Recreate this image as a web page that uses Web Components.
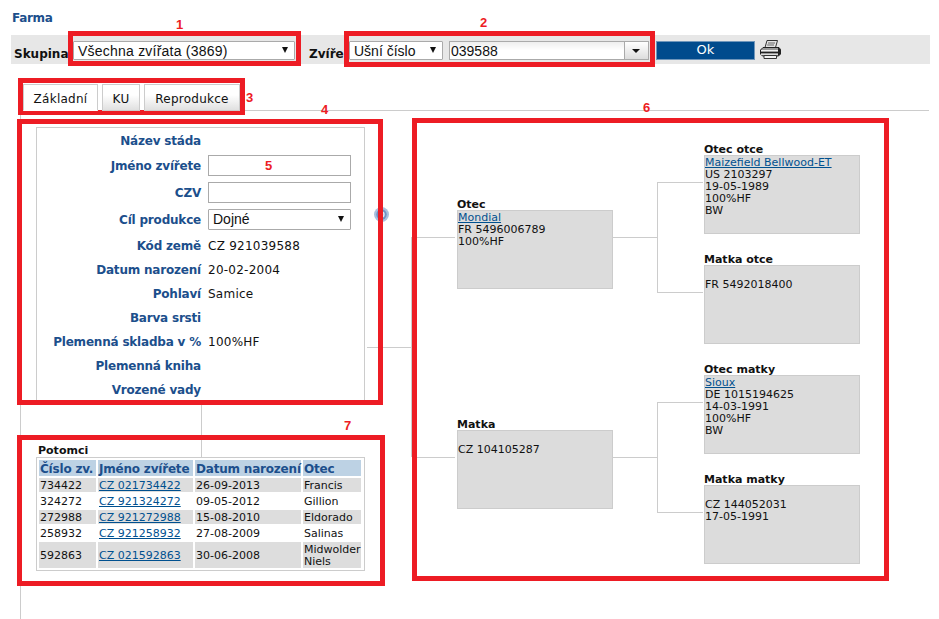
<!DOCTYPE html>
<html lang="cs"><head><meta charset="utf-8"><title>Farma</title>
<style>
html,body{margin:0;padding:0;background:#fff;height:619px;overflow:hidden}
body{font:11px "DejaVu Sans",Verdana,sans-serif;color:#111}
</style></head>
<body>
<farm-app>
  <page-title slot="title">Farma</page-title>
  <filter-bar slot="bar">
    <span slot="l1">Skupina</span>
    <drop-select slot="s1" style="--w:222px;--pt:1px;--ls:.22px">Všechna zvířata (3869)</drop-select>
    <span slot="l2">Zvíře</span>
    <drop-select slot="s2" style="--w:94px;--pt:1px">Ušní číslo</drop-select>
    <combo-input slot="c">039588</combo-input>
  </filter-bar>
  <tab-strip slot="tabs">
    <tab-item active>Základní</tab-item><tab-item style="--w:38px">KU</tab-item><tab-item style="--w:96px">Reprodukce</tab-item>
  </tab-strip>
  <animal-form slot="form">
    <form-row>
      <span slot="label">Název stáda</span>
    </form-row>
    <form-row tall><span slot="label">Jméno zvířete</span><text-box></text-box></form-row>
    <form-row tall><span slot="label">CZV</span><text-box></text-box></form-row>
    <form-row tall><span slot="label">Cíl produkce</span><drop-select style="--w:143px;--h:21px">Dojné</drop-select></form-row>
    <form-row><span slot="label">Kód země</span>CZ 921039588</form-row>
    <form-row><span slot="label">Datum narození</span>20-02-2004</form-row>
    <form-row><span slot="label">Pohlaví</span>Samice</form-row>
    <form-row><span slot="label">Barva srsti</span></form-row>
    <form-row><span slot="label">Plemenná skladba v %</span>100%HF</form-row>
    <form-row><span slot="label">Plemenná kniha</span></form-row>
    <form-row><span slot="label">Vrozené vady</span></form-row>
  </animal-form>
  <offspring-table slot="kids"></offspring-table>
  <pedigree-tree slot="tree">
    <pedigree-node title="Otec" style="--x:92px;--y:83px"><a href="#">Mondial</a><br>FR 5496006789<br>100%HF</pedigree-node>
    <pedigree-node title="Otec otce" style="--x:339px;--y:28px"><a href="#">Maizefield Bellwood-ET</a><br>US 2103297<br>19-05-1989<br>100%HF<br>BW</pedigree-node>
    <pedigree-node title="Matka otce" style="--x:339px;--y:138px"><br>FR 5492018400</pedigree-node>
    <pedigree-node title="Matka" style="--x:92px;--y:303px"><br>CZ 104105287</pedigree-node>
    <pedigree-node title="Otec matky" style="--x:339px;--y:248px"><a href="#">Sioux</a><br>DE 1015194625<br>14-03-1991<br>100%HF<br>BW</pedigree-node>
    <pedigree-node title="Matka matky" style="--x:339px;--y:358px"><br>CZ 144052031<br>17-05-1991</pedigree-node>
  </pedigree-tree>
</farm-app>
<red-mark style="--x:68px;--y:31px;--w:233px;--h:35px"></red-mark>
<red-mark style="--x:344px;--y:31px;--w:311px;--h:36px"></red-mark>
<red-mark style="--x:18px;--y:78px;--w:227px;--h:37px"></red-mark>
<red-mark style="--x:17px;--y:119px;--w:366px;--h:286px"></red-mark>
<red-mark style="--x:412px;--y:118px;--w:477px;--h:463px"></red-mark>
<red-mark style="--x:17px;--y:435px;--w:368px;--h:151px"></red-mark>
<red-num style="--x:176px;--y:17px">1</red-num>
<red-num style="--x:480px;--y:15px">2</red-num>
<red-num style="--x:246px;--y:90px">3</red-num>
<red-num style="--x:321px;--y:102px">4</red-num>
<red-num style="--x:265px;--y:158px">5</red-num>
<red-num style="--x:643px;--y:100px">6</red-num>
<red-num style="--x:344px;--y:418px">7</red-num>
<script>
function def(name, html, init){
  customElements.define(name, class extends HTMLElement{
    constructor(){super();const r=this.attachShadow({mode:'open'});r.innerHTML=typeof html==='function'?html(this):html;}
    connectedCallback(){ if(init) init(this); }
  });
}
const V='"DejaVu Sans",Verdana,sans-serif', A='"Liberation Sans",Arial,sans-serif';

def('farm-app',`<style>
:host{display:block;width:939px;height:619px}
.head{height:35px}
.panel{margin-left:20px;width:909px;height:509px;border-left:1px solid #ccc;border-top:1px solid #ccc;display:flex;padding:16px 0 0 15px;box-sizing:border-box}
.left{width:329px;flex:none;display:flex;flex-direction:column}
</style>
<div class="head"><slot name="title"></slot></div>
<slot name="bar"></slot>
<slot name="tabs"></slot>
<div class="panel"><div class="left"><slot name="form"></slot><slot name="kids"></slot></div><slot name="tree"></slot></div>`);

def('page-title',`<style>:host{display:block;padding:12px 0 0 12px;font:bold 12px/13px ${V};letter-spacing:-.3px;color:#1c4f8c}</style><slot></slot>`);

def('filter-bar',`<style>
:host{display:flex;align-items:flex-start;margin-left:11px;width:919px;height:29px;background:#e7e7e7;box-sizing:border-box;padding:6px 0 0 3px}
.l{font:bold 12px/14px ${V};color:#111;padding-top:6px}
.l1{width:59px;flex:none}.l2{margin-left:14px;width:40px;flex:none}
.ml{margin-left:6px;display:flex;flex:none}
.ok{margin-left:7px;width:99px;flex:none;height:19px;box-sizing:border-box;background:#004b8d;border:1px solid #6f96bb;color:#fff;font:13px/16px ${V};text-align:center}
svg{margin:-1px 0 0 5px;flex:none}
</style>
<span class="l l1"><slot name="l1"></slot></span><slot name="s1"></slot>
<span class="l l2"><slot name="l2"></slot></span><slot name="s2"></slot>
<span class="ml"><slot name="c"></slot></span>
<div class="ok" role="button">Ok</div>
<svg width="21" height="19" viewBox="0 0 21 19" aria-label="Tisk">
<path d="M7 .5 L17.5 .5 L15.5 7.5 L5 7.5Z" fill="#e4e4e4" stroke="#333"/>
<path d="M8 3H15M7.2 5H14" stroke="#666"/>
<path d="M3 7.5H19L20.5 9.5V14L18.5 16H2.5L.5 14V10Z" fill="#9a9a9a" stroke="#222"/>
<path d="M1 10.5H18" stroke="#f0f0f0"/><path d="M1 12.5H18" stroke="#222"/><path d="M1 14.5H18" stroke="#ddd"/>
<path d="M4 15.5H16.5V18.5H4Z" fill="#f3f3f3" stroke="#333"/>
<path d="M18 7.5L20.5 9.5V14L18 16Z" fill="#222"/>
</svg>`);

def('drop-select',`<style>
:host{display:block;flex:none;width:var(--w);height:var(--h,19px);box-sizing:border-box;border:1px solid #aaa;background:#fff;border-radius:1px;font:14px/17px ${A};color:#111;padding:var(--pt,0) 0 0 4px;position:relative;white-space:nowrap;letter-spacing:var(--ls,0);line-height:calc(var(--h,19px) - 2px)}
i{position:absolute;right:6px;top:50%;margin-top:-4px;width:0;height:0;border:4px solid transparent;border-width:6px 3.5px 0;border-top-color:#111}
</style><slot></slot><i></i>`);

def('combo-input',`<style>
:host{display:flex;width:200px;height:19px;box-sizing:border-box;border:1px solid #aaa;background:linear-gradient(#eee,#fff 50%);font:14px/18px ${A};color:#111}
.t{flex:1;padding-left:1px}
.b{width:23px;border-left:1px solid #aaa;background:linear-gradient(#fff,#ddd);position:relative}
.b i{position:absolute;left:7px;top:7px;width:0;height:0;border:4px solid transparent;border-width:4px 4px 0;border-top-color:#111}
</style><div class="t"><slot></slot></div><div class="b"><i></i></div>`);

def('tab-strip',`<style>
:host{display:flex;gap:4px;margin:20px 0 -1px 23px;height:27px;position:relative;z-index:1}
</style><slot></slot>`);

def('tab-item',`<style>
:host{display:block;box-sizing:border-box;width:var(--w,75px);height:27px;border:1px solid #ccc;text-align:center;font:12px/29px ${V};letter-spacing:.25px;color:#111;background:linear-gradient(#fff 40%,#e0e0e0)}
:host([active]){background:#fff;border-bottom-color:#fff}
</style><slot></slot>`);

def('animal-form',`<style>
:host{display:block;box-sizing:border-box;border:1px solid #ccc;height:277px;padding-bottom:2px}
</style><slot></slot>`);

def('form-row',`<style>
:host{display:grid;box-sizing:border-box;grid-template-columns:164px 1fr;column-gap:7px;height:24px;padding-top:1px;align-items:center;font:12px/14px ${V};letter-spacing:.25px;color:#111}
:host([tall]){height:27px;padding-top:0}
.l{font-weight:bold;color:#1c4f8c;text-align:right;white-space:nowrap;letter-spacing:-.2px}
</style><div class="l"><slot name="label"></slot></div><div><slot></slot></div>`);

def('text-box',`<style>:host{display:block;width:143px;height:21px;box-sizing:border-box;border:1px solid #aaa;background:#fff}</style>`);

const rows=[['734422','CZ 021734422','26-09-2013','Francis'],['324272','CZ 921324272','09-05-2012','Gillion'],['272988','CZ 921272988','15-08-2010','Eldorado'],['258932','CZ 921258932','27-08-2009','Salinas'],['592863','CZ 021592863','30-06-2008','Midwolder Niels']];
def('offspring-table',`<style>
:host{display:block}
.stem{height:53px;margin-left:165px;border-left:1px solid #ccc;display:flex;align-items:flex-end}
.cap{margin-left:-164px;font:bold 11px/12px ${V};color:#111;white-space:nowrap}
.box{border:1px solid #ccc;width:329px;box-sizing:border-box;height:114px}
table{border-collapse:separate;border-spacing:2px;table-layout:fixed;width:326px;font:11px/12px ${V};color:#111}
th{font:bold 12px/14px ${V};letter-spacing:-.2px;color:#1c4f8c;background:#bdd2e4;text-align:left;padding:2px 1px 0;white-space:nowrap}
td{padding:2px 1px 0;vertical-align:middle}
tr:nth-child(odd) td{background:#ddd}
a{color:#00508f}
</style>
<div class="stem"><div class="cap">Potomci</div></div>
<div class="box"><table>
<colgroup><col style="width:57px"><col style="width:95px"><col style="width:106px"><col style="width:58px"></colgroup>
<thead><tr><th>Číslo zv.</th><th>Jméno zvířete</th><th>Datum narození</th><th>Otec</th></tr></thead>
<tbody>${rows.map(r=>`<tr><td>${r[0]}</td><td><a href="#">${r[1]}</a></td><td>${r[2]}</td><td>${r[3]}</td></tr>`).join('')}</tbody>
</table></div>`);

def('pedigree-tree',`<style>
:host{display:block;position:relative;width:565px;height:470px;flex:none}
b{position:absolute;background:#ccc;display:block}
svg{position:absolute;left:9px;top:80px}
</style>
<b style="left:2px;top:220px;width:45px;height:1px"></b>
<b style="left:46px;top:110px;width:1px;height:220px"></b>
<b style="left:47px;top:110px;width:43px;height:1px"></b>
<b style="left:47px;top:330px;width:43px;height:1px"></b>
<b style="left:248px;top:110px;width:44px;height:1px"></b>
<b style="left:292px;top:55px;width:1px;height:110px"></b>
<b style="left:292px;top:55px;width:46px;height:1px"></b>
<b style="left:292px;top:165px;width:46px;height:1px"></b>
<b style="left:248px;top:330px;width:44px;height:1px"></b>
<b style="left:292px;top:275px;width:1px;height:110px"></b>
<b style="left:292px;top:275px;width:46px;height:1px"></b>
<b style="left:292px;top:385px;width:46px;height:1px"></b>
<svg width="15" height="15" viewBox="0 0 15 15" aria-hidden="true">
<circle cx="7.5" cy="7.5" r="7.5" fill="#a9c1e0"/><circle cx="7.5" cy="7.5" r="5.2" fill="#6f93c4"/><circle cx="7.5" cy="7.5" r="3.2" fill="#dfe8f4"/><circle cx="7.5" cy="7.5" r="1.6" fill="#5c86bd"/>
</svg>
<slot></slot>`);

def('pedigree-node',el=>`<style>
:host{position:absolute;left:var(--x);top:var(--y);width:156px;height:79px;box-sizing:border-box;border:1px solid #ccc;background:#dcdcdc;font:11px/12px ${V};color:#111;white-space:nowrap;padding-top:1px}
.t{position:absolute;left:-1px;top:-12px;font:bold 11px/12px ${V};color:#111}
::slotted(a){color:#00508f}
</style><div class="t">${el.getAttribute('title')}</div><div><slot></slot></div>`);

def('red-mark',`<style>:host{position:absolute;left:var(--x);top:var(--y);width:var(--w);height:var(--h);box-sizing:border-box;border:5px solid #ed1c24;pointer-events:none}</style>`);
def('red-num',`<style>:host{position:absolute;left:var(--x);top:var(--y);font:bold 13px/15px ${A};color:#ed1c24}</style><slot></slot>`);
</script>
</body></html>
